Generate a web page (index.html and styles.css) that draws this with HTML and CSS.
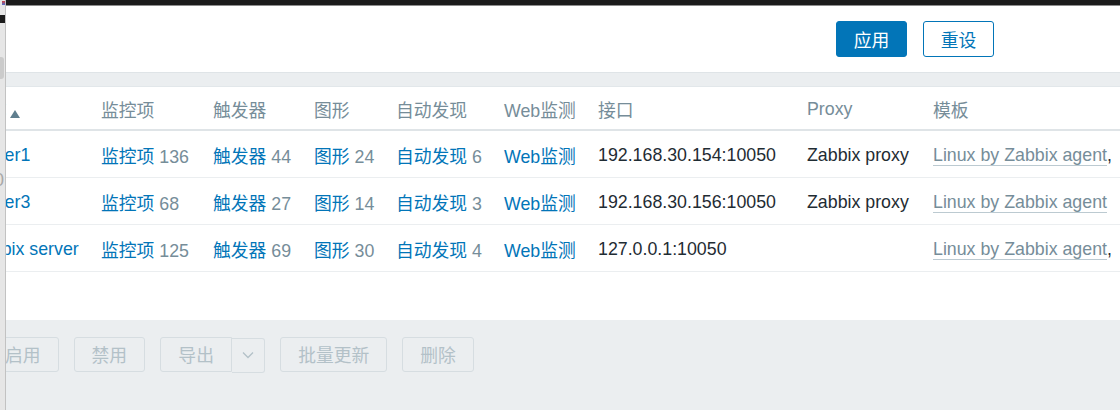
FILE: index.html
```html
<!DOCTYPE html>
<html lang="zh-CN">
<head>
<meta charset="utf-8">
<title>主机</title>
<link rel="stylesheet" href="styles.css">
</head>
<body>
<div class="screen">
  <div class="edge">
    <div class="edge-dot"></div>
    <div class="edge-bar"></div>
    <div class="edge-knob"></div>
    <div class="edge-glyph edge-zero">0</div>
    <div class="edge-glyph edge-hat">î</div>
  </div>
  <div class="window">
    <div class="topbar"></div>
    <div class="viewport">
      <div class="page">
        <form class="filter">
          <button type="button" class="btn btn-primary">应用</button>
          <button type="button" class="btn btn-outline">重设</button>
        </form>
        <div class="band"></div>
        <div class="table-box">
          <table class="hosts">
            <thead>
              <tr>
                <th class="c-name">名称<span class="sort-up"></span></th>
                <th class="c-items">监控项</th>
                <th class="c-triggers">触发器</th>
                <th class="c-graphs">图形</th>
                <th class="c-discovery">自动发现</th>
                <th class="c-web">Web监测</th>
                <th class="c-iface">接口</th>
                <th class="c-proxy">Proxy</th>
                <th class="c-tpl">模板</th>
              </tr>
            </thead>
            <tbody>
              <tr>
                <td><a class="link">server1</a></td>
                <td><a class="link">监控项</a> <span class="count">136</span></td>
                <td><a class="link">触发器</a> <span class="count">44</span></td>
                <td><a class="link">图形</a> <span class="count">24</span></td>
                <td><a class="link">自动发现</a> <span class="count">6</span></td>
                <td><a class="link">Web监测</a></td>
                <td>192.168.30.154:10050</td>
                <td>Zabbix proxy</td>
                <td><a class="tpl">Linux by Zabbix agent</a>,&nbsp; <a class="tpl">Zabbix proxy health</a></td>
              </tr>
              <tr>
                <td><a class="link">server3</a></td>
                <td><a class="link">监控项</a> <span class="count">68</span></td>
                <td><a class="link">触发器</a> <span class="count">27</span></td>
                <td><a class="link">图形</a> <span class="count">14</span></td>
                <td><a class="link">自动发现</a> <span class="count">3</span></td>
                <td><a class="link">Web监测</a></td>
                <td>192.168.30.156:10050</td>
                <td>Zabbix proxy</td>
                <td><a class="tpl">Linux by Zabbix agent</a></td>
              </tr>
              <tr>
                <td><a class="link">Zabbix server</a></td>
                <td><a class="link">监控项</a> <span class="count">125</span></td>
                <td><a class="link">触发器</a> <span class="count">69</span></td>
                <td><a class="link">图形</a> <span class="count">30</span></td>
                <td><a class="link">自动发现</a> <span class="count">4</span></td>
                <td><a class="link">Web监测</a></td>
                <td>127.0.0.1:10050</td>
                <td></td>
                <td><a class="tpl">Linux by Zabbix agent</a>,&nbsp; <a class="tpl">Zabbix server health</a></td>
              </tr>
            </tbody>
          </table>
        </div>
        <div class="actions">
          <button type="button" class="btn btn-muted" disabled>启用</button>
          <button type="button" class="btn btn-muted" disabled>禁用</button>
          <div class="split">
            <button type="button" class="btn btn-muted split-main" disabled>导出</button>
            <button type="button" class="btn btn-muted split-toggle" disabled>
              <svg width="12" height="8" viewBox="0 0 12 8"><path d="M1 1.5 L6 6.5 L11 1.5" fill="none" stroke="#b3c1c8" stroke-width="1.3"/></svg>
            </button>
          </div>
          <button type="button" class="btn btn-muted" disabled>批量更新</button>
          <button type="button" class="btn btn-muted" disabled>删除</button>
        </div>
      </div>
    </div>
  </div>
</div>
</body>
</html>
```

FILE: styles.css
```css
* {
  box-sizing: border-box;
}

html,
body {
  margin: 0;
  padding: 0;
}

body {
  width: 1120px;
  height: 410px;
  overflow: hidden;
  font-family: "Liberation Sans", Arial, "Noto Sans CJK SC", sans-serif;
  font-size: 17.8px;
  color: #1f2c33;
  background: #ebeef0;
}

.screen {
  display: flex;
  height: 410px;
}

/* sliver of the window behind */
.edge {
  width: 6px;
  flex: none;
  background: #e6e6e6;
  border-right: 1px solid #c2c2c2;
  display: flex;
  flex-direction: column;
  overflow: hidden;
}

.edge-dot {
  width: 3px;
  height: 4px;
  margin: 1px 0 0 2px;
  background: linear-gradient(#d04040, #4a6fd0);
}

.edge-bar {
  height: 8px;
  margin-top: 10px;
  background: #1b1b1b;
}

.edge-knob {
  height: 22px;
  width: 4px;
  margin-top: 34px;
  background: #cbcbcb;
  border-radius: 0 3px 3px 0;
}

.edge-glyph {
  margin-left: -6px;
  line-height: 1;
  font-size: 18px;
}

.edge-zero {
  margin-top: 92px;
  color: #a8a8a8;
}

.edge-hat {
  margin-top: 144px;
  color: #111;
}

.window {
  flex: 1;
  min-width: 0;
  display: flex;
  flex-direction: column;
}

.topbar {
  height: 6px;
  flex: none;
  background: #1b1b1b;
  border-bottom: 1px solid #8d8d8d;
}

.viewport {
  flex: 1;
  overflow: hidden;
}

.page {
  margin-left: -35px;
}

/* filter form */
.filter {
  height: 66px;
  margin: 0;
  background: #fff;
  display: flex;
  justify-content: flex-end;
  align-items: flex-start;
  gap: 16px;
  padding: 15px 126px 0 0;
}

.btn {
  font: inherit;
  height: 36px;
  padding: 0 17px;
  border-radius: 3px;
  border: 1px solid transparent;
  cursor: pointer;
  white-space: nowrap;
}

.btn-primary {
  width: 71px;
  padding: 0;
  background: #0275b8;
  border-color: #0275b8;
  color: #fff;
}

.btn-outline {
  width: 71px;
  padding: 0;
  background: #fff;
  border-color: #0275b8;
  color: #0275b8;
}

.band {
  height: 15px;
  background: #ebeef0;
  border-top: 1px solid #dfe4e7;
  border-bottom: 1px solid #e2e7ea;
}

/* host list */
.table-box {
  background: #fff;
  padding-bottom: 48px;
}

.hosts {
  width: 100%;
  border-collapse: collapse;
  table-layout: fixed;
}

.hosts th,
.hosts td {
  padding: 0;
  text-align: left;
  white-space: nowrap;
  vertical-align: middle;
}

.hosts th {
  height: 43px;
  padding-top: 2px;
  font-weight: normal;
  color: #768d99;
  border-bottom: 2px solid #dfe4e7;
}

.hosts td {
  height: 47px;
  padding-top: 3px;
  border-bottom: 1px solid #ebeef0;
}

.c-name { width: 130px; }
.c-items { width: 112px; }
.c-triggers { width: 101px; }
.c-graphs { width: 82px; }
.c-discovery { width: 108px; }
.c-web { width: 94px; }
.c-iface { width: 209px; }
.c-proxy { width: 126px; }

.sort-up {
  display: inline-block;
  margin-left: 3px;
  width: 0;
  height: 0;
  border-left: 5.5px solid transparent;
  border-right: 5.5px solid transparent;
  border-bottom: 8px solid #5f7e8e;
  vertical-align: -1px;
}

.link {
  color: #0275b8;
  text-decoration: none;
}

.count {
  color: #768d99;
}

.tpl {
  color: #768d99;
  text-decoration: none;
  border-bottom: 1px solid #bccad1;
}

/* mass action bar */
.actions {
  display: flex;
  align-items: flex-start;
  gap: 15px;
  padding: 17px 0 0 16px;
  height: 100px;
  background: #ebeef0;
}

.btn-muted {
  height: 35px;
  background: #ebeef0;
  border-color: #d6dde1;
  color: #b3c1c8;
  cursor: default;
}

.split {
  display: flex;
}

.split-main {
  border-radius: 3px 0 0 3px;
  width: 72px;
  padding: 0;
}

.split-toggle {
  width: 33px;
  padding: 0;
  margin-top: 1px;
  border-left: none;
  border-radius: 0 3px 3px 0;
  display: flex;
  align-items: center;
  justify-content: center;
}
```
